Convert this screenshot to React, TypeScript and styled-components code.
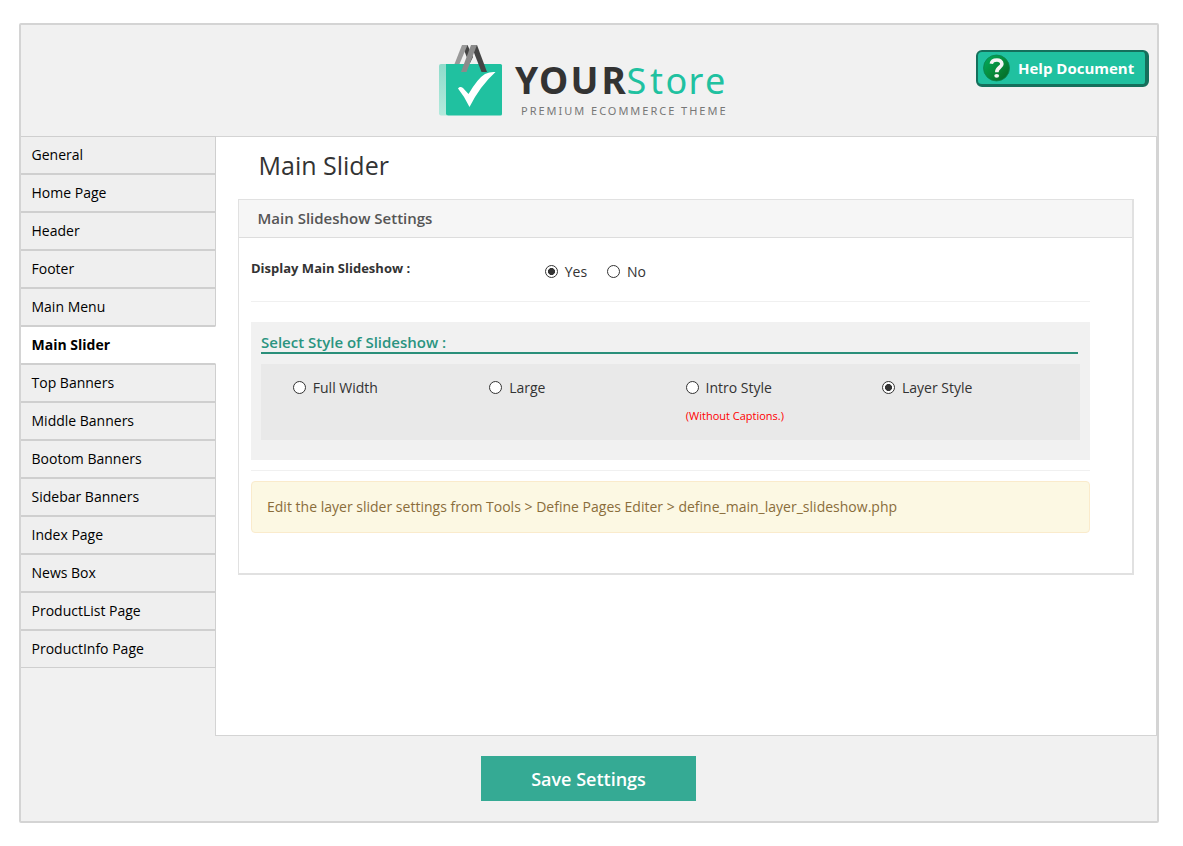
import React, { useState } from 'react';
import styled, { createGlobalStyle } from 'styled-components';

const GlobalStyle = createGlobalStyle`
  *, *::before, *::after { box-sizing: border-box; }
  body {
    margin: 0;
    background: #fff;
    color: #333;
    font: 14px/20px "Open Sans", sans-serif;
  }
`;

const Frame = styled.div`
  width: 1140px;
  height: 800px;
  margin: 23px 0 0 19px;
  display: flex;
  flex-direction: column;
  background: #f1f1f1;
  border: 2px solid #d4d4d4;
  border-radius: 2px;
`;

const Header = styled.header`
  height: 111px;
  flex: none;
  display: grid;
  grid-template-columns: 1fr auto 1fr;
  align-items: start;
`;

const LogoSvg = styled.svg`
  grid-column: 2;
  display: block;
  margin: 15px 0 0 -10px;
`;

const HelpButton = styled.button`
  justify-self: end;
  display: flex;
  align-items: center;
  gap: 7px;
  width: 173px;
  height: 37px;
  margin: 25px 8px 0 0;
  padding: 0 0 0 5px;
  border: solid #15705c;
  border-width: 2px 4px 3px 2px;
  border-radius: 6px;
  background: #20c1a0;
  color: #fff;
  font: 700 15px/20px "Open Sans", sans-serif;
  white-space: nowrap;
`;

const Main = styled.div`
  display: flex;
  height: 600px;
  flex: none;
`;

const Sidebar = styled.nav`
  width: 195px;
  flex: none;
  margin-right: -1px;
  z-index: 1;
`;

const NavItem = styled.a<{ $active: boolean }>`
  display: block;
  height: 38px;
  padding: 8px 0 0 10.5px;
  border: solid #cfcfcf;
  border-width: 1px 1px 1px 0;
  border-right-color: ${p => (p.$active ? '#fff' : '#cfcfcf')};
  background: ${p => (p.$active ? '#fff' : '#efefef')};
  color: #000;
  font-weight: ${p => (p.$active ? 700 : 400)};
`;

const Content = styled.main`
  flex: 1;
  background: #fff;
  border: 1px solid #d4d4d4;
  padding: 13px 22px 0;
`;

const Title = styled.h1`
  margin: 0 0 19px 20.5px;
  font: 400 25px/30px "Open Sans", sans-serif;
`;

const Panel = styled.section`
  height: 376px;
  border: solid #e1e1e1;
  border-width: 1px 2px 2px 1px;
`;

const PanelHeading = styled.h2`
  margin: 0;
  height: 38px;
  padding-left: 18.5px;
  border-bottom: 1px solid #ddd;
  background: #f6f6f6;
  color: #555;
  font: 600 15px/37px "Open Sans", sans-serif;
`;

const PanelBody = styled.div`
  padding: 0 42px 0 12px;
`;

const FieldRow = styled.div`
  display: flex;
  height: 64px;
  padding-top: 20px;
  border-bottom: 1px solid #f0f0f0;
`;

const FieldLabel = styled.span`
  width: 294px;
  font-size: 13px;
  font-weight: 700;
`;

const RadioGroup = styled.div`
  display: flex;
  gap: 20px;
  padding-top: 4px;
`;

const RadioLabel = styled.label`
  display: flex;
  align-items: flex-start;
  height: 20px;
  gap: 6.8px;
`;

const Radio = styled.input`
  appearance: none;
  width: 13px;
  height: 13px;
  flex: none;
  margin: 3px 0 0;
  border: 1px solid #333;
  border-radius: 50%;
  background: #fff;
  &:checked {
    background: radial-gradient(circle, #333 0 3.2px, #fff 3.8px);
  }
`;

const StyleBox = styled.section`
  height: 138px;
  margin-top: 20px;
  padding: 10px 10px 0;
  background: #f1f1f1;
`;

const StyleHeading = styled.h3`
  height: 22px;
  margin: 0 2px 10px 0;
  border-bottom: 2px solid #2a8f7a;
  color: #2a9480;
  font: 600 15px/21px "Open Sans", sans-serif;
`;

const StyleOptions = styled.div`
  display: grid;
  grid-template-columns: repeat(4, 196.4px);
  height: 76px;
  padding: 14px 0 0 32px;
  background: #e9e9e9;
`;

const Hint = styled.div`
  margin-top: 8px;
  color: #f00;
  font-size: 11px;
`;

const Notice = styled.div`
  height: 52px;
  margin-top: 10px;
  padding: 15px;
  border: 1px solid #faebcc;
  border-radius: 4px;
  background: #fcf8e3;
  color: #8a6d3b;
  letter-spacing: 0.01px;
`;

const Divider = styled.div`
  height: 1px;
  margin-top: 10px;
  background: #f0f0f0;
`;

const Footer = styled.footer`
  display: flex;
  justify-content: center;
  padding: 20px 1px 0 0;
`;

const SaveButton = styled.button`
  width: 215px;
  height: 45px;
  border: 0;
  padding: 0;
  background: #35aa94;
  color: #fff;
  font: 600 18px/24px "Open Sans", sans-serif;
`;

const Logo = () => (
  <LogoSvg width="300" height="80" viewBox="434 40 300 80">
    <defs>
      <linearGradient id="side" x1="0" y1="0" x2="0" y2="1">
        <stop offset="0" stopColor="#8fdccb" />
        <stop offset="1" stopColor="#b4eadd" />
      </linearGradient>
    </defs>
    <path d="M441 64H447V115.500H441Q439 115.500 439 113.500V66Q439 64 441 64Z" fill="url(#side)" />
    <path d="M446 64H500.500Q502 64 502 65.500V114Q502 115.500 500.500 115.500H448Q446 115.500 446 113.500Z" fill="#20c1a0" />
    <path d="M462 45H467.500L473 57L469.500 64Z" fill="#444" />
    <path d="M462 45H467.500L459.500 64H454.500Z" fill="#999" />
    <path d="M471 45H477L487 72H481.500Z" fill="#444" />
    <path d="M471 45H477L466.500 72H461Z" fill="#8b8b8b" />
    <path d="M458 88.500Q460 86 463 88L468.500 94Q478 78 485 74Q490 71.500 495.500 72Q480 86 469.500 107Q464.500 96.500 458 88.500Z" fill="#fff" />
    <text x="515 539 570.500 601.500" y="94" fontFamily="Noto Sans" fontSize="37" fontWeight="700" fill="#333">YOUR</text>
    <text x="626.500 650 665.500 688.500 705" y="94" fontFamily="Noto Sans" fontSize="36" fill="#20c1a0">Store</text>
    <text x="521" y="115" fontFamily="Noto Sans" fontSize="11" fill="#777" textLength="204.500">PREMIUM ECOMMERCE THEME</text>
  </LogoSvg>
);

const HelpIcon = () => (
  <svg width="28" height="28" viewBox="0 0 28 28">
    <defs>
      <linearGradient id="ball" x1="0" y1="0" x2="1" y2="1">
        <stop offset="0" stopColor="#00ae60" />
        <stop offset="0.5" stopColor="#078c3c" />
        <stop offset="1" stopColor="#056322" />
      </linearGradient>
    </defs>
    <circle cx="13.500" cy="14" r="13" fill="url(#ball)" stroke="#0c8350" strokeWidth="0.8" />
    <path d="M8.300 9.800C9.100 4.900 18.900 4.600 18.900 9.900C18.900 13.500 13.800 13.100 13.800 18.200" fill="none" stroke="#f4f4f4" strokeWidth="3.600" />
    <ellipse cx="13.700" cy="21.800" rx="2.400" ry="1.900" fill="#f4f4f4" />
  </svg>
);

const pages = [
  'General', 'Home Page', 'Header', 'Footer', 'Main Menu', 'Main Slider', 'Top Banners',
  'Middle Banners', 'Bootom Banners', 'Sidebar Banners', 'Index Page', 'News Box',
  'ProductList Page', 'ProductInfo Page',
];

const styles = [
  { name: 'Full Width' },
  { name: 'Large' },
  { name: 'Intro Style', hint: '(Without Captions.)' },
  { name: 'Layer Style' },
];

export default function App() {
  const [display, setDisplay] = useState('Yes');
  const [style, setStyle] = useState('Layer Style');
  return (
    <>
      <GlobalStyle />
      <Frame>
        <Header>
          <Logo />
          <HelpButton><HelpIcon />Help Document</HelpButton>
        </Header>
        <Main>
          <Sidebar>
            {pages.map(p => <NavItem key={p} $active={p === 'Main Slider'}>{p}</NavItem>)}
          </Sidebar>
          <Content>
            <Title>Main Slider</Title>
            <Panel>
              <PanelHeading>Main Slideshow Settings</PanelHeading>
              <PanelBody>
                <FieldRow>
                  <FieldLabel>Display Main Slideshow :</FieldLabel>
                  <RadioGroup>
                    {['Yes', 'No'].map(v => (
                      <RadioLabel key={v}>
                        <Radio type="radio" name="display" checked={display === v} onChange={() => setDisplay(v)} />
                        {v}
                      </RadioLabel>
                    ))}
                  </RadioGroup>
                </FieldRow>
                <StyleBox>
                  <StyleHeading>Select Style of Slideshow :</StyleHeading>
                  <StyleOptions>
                    {styles.map(s => (
                      <div key={s.name}>
                        <RadioLabel>
                          <Radio type="radio" name="style" checked={style === s.name} onChange={() => setStyle(s.name)} />
                          {s.name}
                        </RadioLabel>
                        {s.hint && <Hint>{s.hint}</Hint>}
                      </div>
                    ))}
                  </StyleOptions>
                </StyleBox>
                <Divider />
                <Notice>Edit the layer slider settings from Tools &gt; Define Pages Editer &gt; define_main_layer_slideshow.php</Notice>
              </PanelBody>
            </Panel>
          </Content>
        </Main>
        <Footer><SaveButton>Save Settings</SaveButton></Footer>
      </Frame>
    </>
  );
}
